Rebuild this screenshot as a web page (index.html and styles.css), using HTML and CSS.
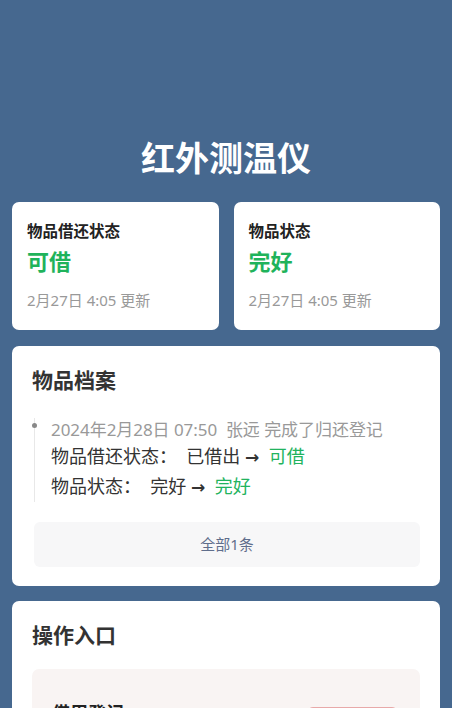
FILE: index.html
```html
<!DOCTYPE html>
<html lang="zh">
<head>
<meta charset="utf-8">
<link rel="stylesheet" href="styles.css">
</head>
<body>
<div class="page">
  <h1 class="title">红外测温仪</h1>
  <div class="status-row">
    <div class="card status">
      <div class="status-label">物品借还状态</div>
      <div class="status-value">可借</div>
      <div class="status-time">2月27日 4:05 更新</div>
    </div>
    <div class="card status">
      <div class="status-label">物品状态</div>
      <div class="status-value">完好</div>
      <div class="status-time">2月27日 4:05 更新</div>
    </div>
  </div>
  <div class="card section">
    <div class="section-title">物品档案</div>
    <div class="timeline">
      <div class="tl-item">
        <span class="tl-dot"></span>
        <div class="tl-head">2024年2月28日 07:50&nbsp; 张远 完成了归还登记</div>
        <div class="tl-line">物品借还状态：&nbsp; 已借出 <span class="arrow">→</span> &nbsp;<span class="ok">可借</span></div>
        <div class="tl-line">物品状态：&nbsp; 完好 <span class="arrow">→</span> &nbsp;<span class="ok">完好</span></div>
      </div>
    </div>
    <div class="all-btn">全部1条</div>
  </div>
  <div class="card section ops">
    <div class="section-title">操作入口</div>
    <div class="op-box">
      <div class="op-name">借用登记</div>
      <div class="op-btn">去登记</div>
    </div>
  </div>
</div>
</body>
</html>
```
FILE: styles.css
```css
html, body {
  margin: 0;
  padding: 0;
  background: #46688f;
  font-family: "Noto Sans", "Noto Sans CJK SC", sans-serif;
}
.page {
  padding: 0 12px 40px;
  height: 708px;
  overflow: hidden;
  box-sizing: border-box;
}
.title {
  margin: 0;
  padding-top: 134px;
  height: 68px;
  box-sizing: content-box;
  text-align: center;
  color: #fff;
  font-size: 34px;
  font-weight: 700;
  line-height: 48px;
}
.card {
  background: #fff;
  border-radius: 7px;
}
.status-row {
  display: flex;
  gap: 15px;
}
.status {
  flex: 1;
  height: 128px;
  padding: 18px 0 0 15px;
  box-sizing: border-box;
}
.status-label {
  font-size: 15.5px;
  font-weight: 700;
  color: #222;
  line-height: 22px;
}
.status-value {
  margin-top: 4px;
  font-size: 22px;
  font-weight: 700;
  color: #1fb35b;
  line-height: 30px;
}
.status-time {
  margin-top: 14px;
  font-size: 15px;
  color: #999;
  line-height: 20px;
}
.section {
  margin-top: 16px;
  padding: 18px 20px 19px 20px;
}
.section-title {
  font-size: 21px;
  font-weight: 700;
  color: #333;
  line-height: 32px;
}
.timeline {
  margin-top: 22px;
  padding-left: 2px;
}
.tl-item {
  position: relative;
  border-left: 1px solid #e8e8e8;
  padding-left: 16px;
  padding-bottom: 0;
}
.tl-dot {
  position: absolute;
  left: -3px;
  top: 5px;
  width: 5px;
  height: 5px;
  border-radius: 50%;
  background: #888;
}
.tl-head {
  font-size: 17px;
  color: #999;
  line-height: 24px;
  letter-spacing: -0.05px;
}
.tl-line {
  font-size: 18px;
  color: #333;
  line-height: 29px;
}
.arrow {
  font-family: "DejaVu Sans", sans-serif;
  font-size: 17px;
  font-weight: 700;
  color: #333;
}
.ok {
  color: #22b35e;
}
.all-btn {
  margin: 20px 0 0 2px;
  height: 45px;
  background: #f7f7f8;
  border-radius: 6px;
  text-align: center;
  line-height: 45px;
  font-size: 15px;
  color: #5f6e8c;
}
.ops {
  margin-top: 15px;
  padding-bottom: 40px;
}
.op-box {
  margin-top: 18px;
  background: #f9f4f3;
  border-radius: 7px;
  height: 120px;
  display: flex;
  justify-content: space-between;
  align-items: flex-start;
  padding: 30px 22px 0 20px;
  box-sizing: border-box;
}
.op-name {
  font-size: 18px;
  font-weight: 700;
  color: #222;
}
.op-btn {
  margin-top: 8px;
  width: 91px;
  height: 36px;
  border: 1px solid #e8a9a9;
  border-radius: 6px;
  box-sizing: border-box;
  text-align: center;
  line-height: 34px;
  color: #d55;
  font-size: 15px;
}
```
